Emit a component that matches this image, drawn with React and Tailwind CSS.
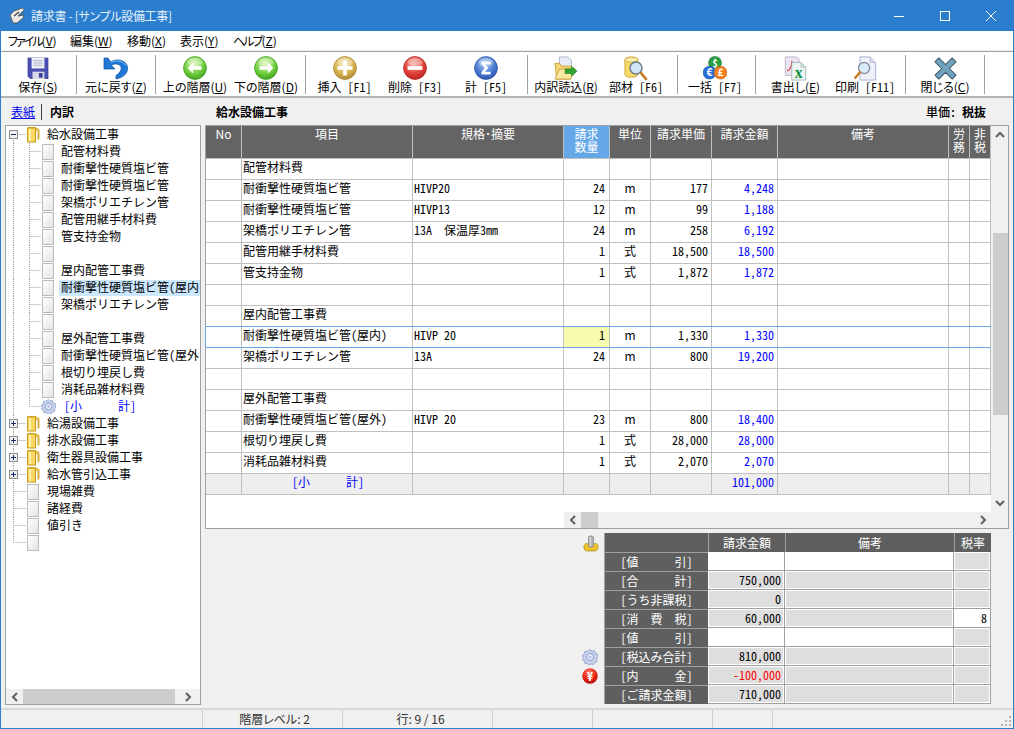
import React from "react";

const F = "[font-family:'Noto_Sans_CJK_JP','Noto_Sans',sans-serif]";
const HW = "[font-feature-settings:'hwid']";
const PW = "[font-feature-settings:'palt']";
const NM = "[font-feature-settings:normal]";

function U({ children }) {
  return <span className="underline">{children}</span>;
}

function Wide({ t }) {
  const parts = t.split("　");
  return (
    <>
      {parts.map((p, i) => (
        <React.Fragment key={i}>
          {i > 0 && <span className={NM}>　</span>}
          {p}
        </React.Fragment>
      ))}
    </>
  );
}

function Circle({ id, c1, c2, c3, children }) {
  return (
    <svg width="24" height="24" viewBox="0 0 26 26">
      <defs>
        <radialGradient id={id} cx="45%" cy="30%" r="75%">
          <stop offset="0%" stopColor={c1} />
          <stop offset="60%" stopColor={c2} />
          <stop offset="100%" stopColor={c3} />
        </radialGradient>
      </defs>
      <circle cx="13" cy="13" r="12.400" fill={`url(#${id})`} stroke={c3} strokeWidth="0.8" />
      <ellipse cx="13" cy="7" rx="8" ry="4.500" fill="#fff" opacity="0.3" />
      {children}
    </svg>
  );
}

const Floppy = () => (
  <svg width="22" height="22" viewBox="0 0 24 24">
    <path d="M1 1h22v23H4l-3-3z" fill="#4a4fb0" stroke="#3a3e96" strokeWidth="0.6" />
    <rect x="5" y="1" width="14" height="11.500" fill="#eef0f6" />
    <path d="M7 4h10M7 6.500h10M7 9h10" stroke="#a8acc8" strokeWidth="1" />
    <rect x="6" y="16" width="13" height="8" fill="#d8dae8" />
    <rect x="13" y="17.500" width="4" height="5" fill="#3a3e96" />
  </svg>
);

const Undo = () => (
  <svg width="26" height="24" viewBox="0 0 26 24">
    <path d="M1 2v11h11L8.500 9.400c3-2.200 7.700-1.800 9.100.7 1.600 3-.2 6.600-4.600 9.400L13 23c7-1.200 12-5.600 11.600-11.400C24 5 15.500 1.500 7.500 5.800L5 2z" fill="#1f78d8" stroke="#0f4f9e" strokeWidth="0.7" />
    <path d="M8 6.500c6-3 12-1.500 15 3" stroke="#7cc0ff" strokeWidth="1" fill="none" />
  </svg>
);

const ArrowLeft = () => (
  <Circle id="gl" c1="#d9f5b0" c2="#6fce3c" c3="#3c9a1e">
    <path d="M5 13l6-6v4h9v4h-9v4z" fill="#fff" />
  </Circle>
);
const ArrowRight = () => (
  <Circle id="gr" c1="#d9f5b0" c2="#6fce3c" c3="#3c9a1e">
    <path d="M21 13l-6-6v4H6v4h9v4z" fill="#fff" />
  </Circle>
);
const Plus = () => (
  <Circle id="gp" c1="#f4e6b0" c2="#d8b350" c3="#a8812c">
    <path d="M11 5h4v6h6v4h-6v6h-4v-6H5v-4h6z" fill="#fff" />
  </Circle>
);
const Minus = () => (
  <Circle id="gm" c1="#f8a8a0" c2="#e04038" c3="#b02020">
    <rect x="5" y="11" width="16" height="4" fill="#fff" />
  </Circle>
);
const Sigma = () => (
  <Circle id="gs" c1="#a8c8f4" c2="#4878d0" c3="#2850a8">
    <path d="M8 6h10v3h-6l3.500 4-3.500 4h6v3H8v-2.500L11.500 13 8 8.500z" fill="#fff" />
  </Circle>
);

const Import = () => (
  <svg width="24" height="24" viewBox="0 0 26 26">
    <path d="M6 1h9l4 4v9H6z" fill="#e8ecf8" stroke="#9aa4c8" strokeWidth="0.8" />
    <path d="M1 8h5l2 3h11l-1 14H3z" fill="#f4d878" stroke="#c89a28" strokeWidth="0.9" />
    <path d="M1 25l5-11h17l-5 11z" fill="#fbe8a0" stroke="#c89a28" strokeWidth="0.9" />
    <path d="M12 14h7v-3l6 5.500-6 5.500v-3h-7z" fill="#30a030" stroke="#1c7a1c" strokeWidth="0.6" />
  </svg>
);
const Parts = () => (
  <svg width="24" height="25" viewBox="0 0 26 27">
    <path d="M1 4c0-4 14-4 14 0v16c0 4-14 4-14 0z" fill="#f4d868" stroke="#c8a028" strokeWidth="0.9" />
    <ellipse cx="8" cy="4" rx="7" ry="2.600" fill="#fbeeb0" stroke="#c8a028" strokeWidth="0.7" />
    <circle cx="13" cy="13" r="6.500" fill="#cfe6f8" stroke="#6a7890" strokeWidth="1.600" />
    <path d="M18 18l6 7" stroke="#c87820" strokeWidth="2.600" strokeLinecap="round" />
  </svg>
);
const Coins = () => (
  <svg width="24" height="24" viewBox="0 0 26 26" className={F}>
    <circle cx="13" cy="7.500" r="7" fill="#2aa040" stroke="#107028" strokeWidth="0.6" />
    <circle cx="7" cy="18" r="7" fill="#2870d8" stroke="#1850a0" strokeWidth="0.6" />
    <circle cx="19" cy="18" r="7" fill="#f08020" stroke="#b85810" strokeWidth="0.6" />
    <text x="13" y="11.500" fontSize="11" fontWeight="700" fill="#fff" textAnchor="middle">$</text>
    <text x="7" y="22" fontSize="11" fontWeight="700" fill="#fff" textAnchor="middle">€</text>
    <text x="19" y="22" fontSize="11" fontWeight="700" fill="#fff" textAnchor="middle">£</text>
  </svg>
);
const Excel = () => (
  <svg width="23" height="25" viewBox="0 0 24 27" className="[font-family:'Liberation_Serif',serif]">
    <path d="M1 1h12l3 3v17H1z" fill="#ece6f4" stroke="#a8a0bc" strokeWidth="0.8" />
    <path d="M3 16c3-1 5-5 5-11" stroke="#e04040" strokeWidth="1.300" fill="none" />
    <path d="M8 7h10l5 5v14H8z" fill="#eef6f4" stroke="#90a8a8" strokeWidth="0.8" />
    <path d="M18 7v5h5" fill="#d0dce0" stroke="#90a8a8" strokeWidth="0.6" />
    <text x="15.500" y="24" fontSize="17" fontWeight="700" fill="#109040" textAnchor="middle">x</text>
  </svg>
);
const Preview = () => (
  <svg width="23" height="25" viewBox="0 0 24 27">
    <path d="M6 1h11l6 6v19H6z" fill="#f0f2fa" stroke="#9ca4cc" strokeWidth="0.9" />
    <path d="M17 1v6h6" fill="#d4d8ec" stroke="#9ca4cc" strokeWidth="0.6" />
    <circle cx="10.500" cy="13" r="6" fill="#d8ecfa" stroke="#8890a0" strokeWidth="1.500" />
    <path d="M6 17.500l-5 6" stroke="#c87820" strokeWidth="2.600" strokeLinecap="round" />
  </svg>
);
const CloseX = () => (
  <svg width="23" height="23" viewBox="0 0 24 24">
    <path d="M5 1l7 7 7-7 4 4-7 7 7 7-4 4-7-7-7 7-4-4 7-7-7-7z" fill="#6fa3bd" stroke="#40586c" strokeWidth="1.100" strokeLinejoin="round" />
  </svg>
);

const Gear = ({ size = 16 }) => (
  <svg width={size} height={size} viewBox="0 0 16 16">
    <path d="M8 .5l2 1.600 2.400-.4.800 2.400 2.300.9-.5 2.500L16 8.500l-1.500 1.900.4 2.400-2.400.7-1.200 2.100-2.400-.5L6.900 16l-1.500-1.600-2.500.1-.5-2.400L.5 10.700 1.300 8.500.4 6.200l2-1.300.4-2.500 2.500 0z" fill="#c6d2ec" stroke="#8a9cc8" strokeWidth="0.8" />
    <circle cx="8" cy="8" r="3.600" fill="#e8eef8" stroke="#8a9cc8" strokeWidth="1" />
    <circle cx="8" cy="8" r="1.500" fill="#b0c0e0" />
  </svg>
);

const YenIcon = () => (
  <svg width="16" height="16" viewBox="0 0 16 16" className={F}>
    <defs>
      <radialGradient id="gy" cx="45%" cy="30%" r="75%">
        <stop offset="0%" stopColor="#ff8a70" />
        <stop offset="60%" stopColor="#e82010" />
        <stop offset="100%" stopColor="#a80808" />
      </radialGradient>
    </defs>
    <circle cx="8" cy="8" r="7.700" fill="url(#gy)" />
    <text x="8" y="12.500" fontSize="12" fontWeight="700" fill="#fff" textAnchor="middle">¥</text>
  </svg>
);

const Lever = () => (
  <svg width="16" height="17" viewBox="0 0 16 17">
    <path d="M1 11c1-3 3-3 4-2h6c1-1 3-1 4 2 .5 2-.5 4-1.500 4.500-1 1-2 0-2.500.5H5c-.5-.5-1.500.5-2.500-.5C1.500 15 .5 13 1 11z" fill="#eec22c" stroke="#a88414" strokeWidth="0.7" />
    <rect x="5.500" y="1" width="5" height="11" rx="1.500" fill="#b4b4b4" stroke="#7c7c7c" strokeWidth="0.7" />
    <rect x="6.800" y="2" width="1.200" height="9" fill="#dcdcdc" />
  </svg>
);

const tools = [
  [[74, <Floppy />, <>保存(<U>S</U>)</>], [1]],
  [[78, <Undo />, <>元に戻す(<U>Z</U>)</>]],
  [[78, <ArrowLeft />, <>上の階層(<U>U</U>)</>], [64, <ArrowRight />, <>下の階層(<U>D</U>)</>], [7]],
  [[77, <Plus />, <span className={HW}>挿入 [F1]</span>], [64, <Minus />, <span className={HW}>削除 [F3]</span>], [78, <Sigma />, <span className={HW}>計 [F5]</span>], [2]],
  [[76, <Import />, <>内訳読込(<U>R</U>)</>], [64, <Parts />, <span className={HW}>部材 [F6]</span>], [9]],
  [[74, <Coins />, <span className={HW}>一括 [F7]</span>], [3]],
  [[79, <Excel />, <>書出し(<U>E</U>)</>], [60, <Preview />, <span className={HW}>印刷 [F11]</span>], [10]],
  [[78, <CloseX />, <>閉じる(<U>C</U>)</>]],
];

const W = [
  "w-[36px]", "w-[171px]", "w-[151px]", "w-[46px]", "w-[41px]",
  "w-[61px]", "w-[66px]", "w-[171px]", "w-[21px]", "w-[21px]",
];

const heads = [<span className={NM}>No</span>, "項目", "規格･摘要", <>請求<br />数量</>, "単位", "請求単価", "請求金額", "備考", <>労<br />務</>, <>非<br />税</>];

const rows = [
  ["配管材料費"],
  ["耐衝撃性硬質塩ビ管", "HIVP20", "24", "m", "177", "4,248"],
  ["耐衝撃性硬質塩ビ管", "HIVP13", "12", "m", "99", "1,188"],
  ["架橋ポリエチレン管", "13A　保温厚3mm", "24", "m", "258", "6,192"],
  ["配管用継手材料費", "", "1", "式", "18,500", "18,500"],
  ["管支持金物", "", "1", "式", "1,872", "1,872"],
  [],
  ["屋内配管工事費"],
  ["耐衝撃性硬質塩ビ管(屋内)", "HIVP 20", "1", "m", "1,330", "1,330"],
  ["架橋ポリエチレン管", "13A", "24", "m", "800", "19,200"],
  [],
  ["屋外配管工事費"],
  ["耐衝撃性硬質塩ビ管(屋外)", "HIVP 20", "23", "m", "800", "18,400"],
  ["根切り埋戻し費", "", "1", "式", "28,000", "28,000"],
  ["消耗品雑材料費", "", "1", "式", "2,070", "2,070"],
];

function Row({ r, active }) {
  const line = active ? "border-b-[#6aa8e6]" : "border-b-[#c0c0c0]";
  const base = `h-full shrink-0 border-r border-b border-r-[#c0c0c0] ${line} leading-[15px] whitespace-nowrap`;
  return (
    <div className={`flex h-[21px] relative ${active ? "shadow-[0_-1px_0_#6aa8e6,-1px_0_0_#6aa8e6]" : ""}`}>
      <div className={`${W[0]} ${base}`} />
      <div className={`${W[1]} ${base} pl-px`}>{r[0]}</div>
      <div className={`${W[2]} ${base} pl-px`}>{r[1] && <Wide t={r[1]} />}</div>
      <div className={`${W[3]} ${base} text-right pr-[4px] ${active ? "bg-[#f6fbb0]" : ""}`}>{r[2]}</div>
      <div className={`${W[4]} ${base} text-center ${NM}`}>{r[3]}</div>
      <div className={`${W[5]} ${base} text-right pr-[3px]`}>{r[4]}</div>
      <div className={`${W[6]} ${base} text-right pr-[3px] text-[#0000ff]`}>{r[5]}</div>
      <div className={`${W[7]} ${base}`} />
      <div className={`${W[8]} ${base}`} />
      <div className={`${W[9]} ${base}`} />
    </div>
  );
}

function TotalRow() {
  const base = "h-full shrink-0 border-r border-b border-[#c0c0c0] leading-[15px] whitespace-nowrap";
  return (
    <div className="flex h-[21px] bg-[#eeeeee]">
      <div className={`${W[0]} ${base}`} />
      <div className={`${W[1]} ${base} pl-[50px] text-[#0000ff]`}><Wide t="[小　　　計]" /></div>
      <div className={`${W[2]} ${base}`} />
      <div className={`${W[3]} ${base}`} />
      <div className={`${W[4]} ${base}`} />
      <div className={`${W[5]} ${base}`} />
      <div className={`${W[6]} ${base} text-right pr-[3px] text-[#0000ff]`}>101,000</div>
      <div className={`${W[7]} ${base}`} />
      <div className={`${W[8]} ${base}`} />
      <div className={`${W[9]} ${base}`} />
    </div>
  );
}

const dot = { stroke: "#a0a0a0", strokeWidth: 1, strokeDasharray: "1 1" };

function Expander({ plus }) {
  return (
    <g>
      <rect x="3.500" y="4.500" width="8" height="8" fill="#f0f0f0" stroke="#8c8c8c" />
      <path d={plus ? "M5 8.500h5M7.500 6v5" : "M5 8.500h5"} stroke="#1c2c70" fill="none" />
    </g>
  );
}

const PageIcon = () => (
  <span className="block w-[12px] h-[16px] shrink-0 border border-[#bcbcbc] bg-gradient-to-br from-[#ffffff] to-[#e4e4e4]" />
);
const FolderIcon = () => (
  <svg width="13" height="16" viewBox="0 0 13 16" className="shrink-0">
    <path d="M1 .5h7l4 2v9l-1 1V4L8 2.500z" fill="#f4d468" stroke="#c89a18" strokeWidth="0.8" />
    <rect x=".5" y="1" width="8" height="14" fill="#fbd860" stroke="#c89a18" />
    <rect x="2" y="2" width="2" height="12" fill="#fdeeb0" />
  </svg>
);

function Top({ label, last, first, plus, leaf }) {
  return (
    <div className="flex h-[17px] items-center">
      <svg width="21" height="17" viewBox="0 0 21 17" className="shrink-0">
        {!last && !first && <path d="M7.500 0V17" {...dot} />}
        {first && <path d="M7.500 12V17" {...dot} />}
        {last && <path d="M7.500 0V8" {...dot} />}
        <path d="M7.500 8.500H20" {...dot} />
        {!leaf && <Expander plus={plus} />}
      </svg>
      {leaf ? <PageIcon /> : <FolderIcon />}
      <span className={`h-[17px] leading-[15px] whitespace-nowrap ${leaf ? "ml-[8px]" : "ml-[7px]"}`}>{label}</span>
    </div>
  );
}

function Child({ label, selected, last, gear, blue }) {
  return (
    <div className="flex h-[17px] items-center">
      <svg width="36" height="17" viewBox="0 0 36 17" className="shrink-0">
        <path d="M7.500 0V17" {...dot} />
        <path d={last ? "M23.500 0V8" : "M23.500 0V17"} {...dot} />
        <path d="M23.500 8.500H35" {...dot} />
      </svg>
      {gear ? <span className="-ml-px"><Gear size={15} /></span> : <PageIcon />}
      <span
        className={`ml-[5px] flex-1 min-w-0 h-[16px] mb-[-1px] leading-[14px] whitespace-nowrap ${selected ? "bg-[#cce8ff]" : ""} ${blue ? "text-[#0000ff] pl-[3px]" : "pl-[2px]"}`}
      >
        {label}
      </span>
    </div>
  );
}

const Chev = ({ d }) => (
  <svg width="10" height="10" viewBox="0 0 10 10">
    <path d={d} fill="none" stroke="#606060" strokeWidth="2" />
  </svg>
);
const L = "M7 1L3 5l4 4";
const R = "M3 1l4 4-4 4";
const Up = "M1 7l4-4 4 4";
const Dn = "M1 3l4 4 4-4";

const sumRows = [
  ["[値　　　引]", "", "", "", true, true, false],
  ["[合　　　計]", "750,000", "", "", false, false, false],
  ["[うち非課税]", "0", "", "", false, false, false],
  ["[消　費　税]", "60,000", "", "8", false, false, true],
  ["[値　　　引]", "", "", "", true, true, false],
  ["[税込み合計]", "810,000", "", "", false, false, false],
  ["[内　　　金]", "-100,000", "", "", false, false, false],
  ["[ご請求金額]", "710,000", "", "", false, false, false],
];

function SumCell({ w, white, children, red }) {
  return (
    <div className={`${w} h-[19px] shrink-0 border-r border-b border-[#a0a0a0] bg-white`}>
      <div className={`h-full leading-[15px] text-right pr-[2px] border border-white whitespace-nowrap ${white ? "bg-white" : "bg-[#dedede]"} ${red ? "text-[#ff0000]" : ""}`}>
        {children}
      </div>
    </div>
  );
}

export default function App() {
  return (
    <div className={`w-[1014px] h-[729px] flex flex-col bg-[#f0f0f0] border-x border-b border-[#2b7fcd] text-[12px] text-black overflow-hidden ${F} ${HW}`}>
      {/* title bar */}
      <div className="h-[31px] -mx-px shrink-0 bg-[#2b7ecd] flex items-center pl-[9px] text-[#e6f0fa]">
        <svg width="17" height="17" viewBox="0 0 17 17" className="shrink-0">
          <path d="M1 8l4-4 8-3c1 0 2 1 2 2L9 9l6-1-1 3-6 5H4z" fill="#e8e8e8" stroke="#505050" strokeWidth="0.9" />
          <path d="M5 9l5-4" stroke="#404040" strokeWidth="1.200" />
        </svg>
        <span className={`ml-[5px] tracking-[-0.3px] ${PW}`}>請求書 - [サンプル設備工事]</span>
        <div className="ml-auto flex items-center">
          <span className="w-[46px] flex justify-center">
            <svg width="10" height="10" viewBox="0 0 10 10"><path d="M0 5.500h10" stroke="#fff" /></svg>
          </span>
          <span className="w-[45px] flex justify-center">
            <svg width="10" height="10" viewBox="0 0 10 10"><rect x=".5" y=".5" width="9" height="9" fill="none" stroke="#fff" /></svg>
          </span>
          <span className="w-[47px] flex justify-center">
            <svg width="10" height="10" viewBox="0 0 10 10"><path d="M0 0l10 10M10 0L0 10" stroke="#fff" /></svg>
          </span>
        </div>
      </div>

      {/* menu */}
      <div className={`h-[19px] shrink-0 bg-white flex items-center pl-[7px] leading-none ${PW}`}>
        <span className="w-[62px]"><span className="tracking-[-2px]">ファイル</span>(<U>V</U>)</span>
        <span className="w-[57px]">編集(<U>W</U>)</span>
        <span className="w-[53px]">移動(<U>X</U>)</span>
        <span className="w-[53px]">表示(<U>Y</U>)</span>
        <span><span className="tracking-[-2px]">ヘルプ</span>(<U>Z</U>)</span>
      </div>

      {/* toolbar */}
      <div className="h-[47px] mt-px shrink-0 bg-white border-t border-b-2 border-t-[#a0a0a0] border-b-[#b4b4b4] flex items-start pt-[3px]">
        {tools.map((group, gi) => (
          <React.Fragment key={gi}>
            {group.map(([w, icon, label], i) => (
              <div key={i} style={{ width: w }} className="shrink-0 flex flex-col items-center h-[40px]">
                {icon && <div className="h-[26px] flex items-center justify-center">{icon}</div>}
                {label && <div className={`h-[14px] leading-[14px] -mt-px whitespace-nowrap ${PW}`}>{label}</div>}
              </div>
            ))}
            <span className="w-px h-[39px] bg-[#a0a0a0] shrink-0" />
          </React.Fragment>
        ))}
      </div>

      {/* sub header */}
      <div className="h-[27px] shrink-0 flex items-center">
        <span className="ml-[10px] text-[#0000ee] underline">表紙</span>
        <span className="ml-[6px] w-px h-[16px] bg-[#404040]" />
        <span className="ml-[8px] font-bold">内訳</span>
        <span className="ml-[142px] font-bold">給水設備工事</span>
        <span className="ml-auto mr-[6px] font-medium">単価:</span>
        <span className="mr-[27px] font-bold">税抜</span>
      </div>

      {/* body */}
      <div className="flex h-[580px] shrink-0 items-start">
        {/* tree */}
        <div className="w-[196px] h-[580px] ml-[4px] shrink-0 border border-[#a0a0a0] bg-white flex flex-col">
          <div className="flex-1 min-h-0 overflow-hidden">
            <Top label="給水設備工事" first />
            {["配管材料費", "耐衝撃性硬質塩ビ管", "耐衝撃性硬質塩ビ管", "架橋ポリエチレン管", "配管用継手材料費", "管支持金物", "", "屋内配管工事費"].map((t, i) => (
              <Child key={i} label={t} />
            ))}
            <Child label="耐衝撃性硬質塩ビ管(屋内" selected />
            <Child label="架橋ポリエチレン管" />
            <Child label="" />
            <Child label="屋外配管工事費" />
            <Child label="耐衝撃性硬質塩ビ管(屋外" />
            <Child label="根切り埋戻し費" />
            <Child label="消耗品雑材料費" />
            <Child label={<Wide t="[小　　　計]" />} gear blue last />
            {["給湯設備工事", "排水設備工事", "衛生器具設備工事", "給水管引込工事"].map((t) => (
              <Top key={t} label={t} plus />
            ))}
            {["現場雑費", "諸経費", "値引き"].map((t) => (
              <Top key={t} label={t} leaf />
            ))}
            <Top label="" leaf last />
          </div>
          <div className="h-[15px] shrink-0 flex items-center bg-[#f0f0f0]">
            <span className="w-[17px] flex justify-center"><Chev d={L} /></span>
            <span className="w-[152px] h-full bg-[#cdcdcd]" />
            <span className="flex-1 flex justify-center"><Chev d={R} /></span>
          </div>
        </div>

        {/* right */}
        <div className="ml-[4px] w-[804px] shrink-0 flex flex-col">
          <div className="h-[404px] border border-[#a0a0a0] bg-white flex">
            <div className="w-[785px] shrink-0 flex flex-col">
              <div className="flex h-[33px] bg-[#646464] text-white">
                {heads.map((h, i) => (
                  <div
                    key={i}
                    className={`${W[i]} shrink-0 h-full border-r border-b border-[#c0c0c0] text-center pt-px leading-[13px] ${i === 3 ? "bg-[#65a8e8]" : ""}`}
                  >
                    {h}
                  </div>
                ))}
              </div>
              {rows.map((r, i) => (
                <Row key={i} r={r} active={i === 8} />
              ))}
              <TotalRow />
              <div className="flex-1 flex flex-col justify-end">
                <div className="h-[16px] ml-[358px] flex items-center bg-[#f0f0f0] w-[427px]">
                  <span className="w-[17px] flex justify-center"><Chev d={L} /></span>
                  <span className="w-[17px] h-full bg-[#cdcdcd]" />
                  <span className="flex-1 flex justify-end pr-[3px]"><Chev d={R} /></span>
                </div>
              </div>
            </div>
            <div className="flex-1 bg-[#f0f0f0] flex flex-col items-center">
              <span className="h-[17px] flex items-center"><Chev d={Up} /></span>
              <span className="w-full h-[90px]" />
              <span className="w-[15px] self-end h-[182px] bg-[#cdcdcd]" />
              <span className="w-full flex-1" />
              <span className="h-[33px] flex items-start pt-[3px]"><Chev d={Dn} /></span>
            </div>
          </div>

          {/* summary */}
          <div className="mt-[4px] ml-[377px] w-[409px] flex flex-col">
            <div className="flex">
              <div className="w-[22px] h-[19px] shrink-0 flex justify-start pt-[2px] pl-px"><Lever /></div>
              <div className="flex flex-col border-l border-t border-[#a0a0a0] w-[387px]">
                <div className="flex h-[19px] bg-[#5f5f5f] text-white -mt-px">
                  <div className="w-[104px] shrink-0 border-r border-[#a0a0a0]" />
                  <div className="w-[77px] shrink-0 border-r border-[#a0a0a0] text-center leading-[19px]">請求金額</div>
                  <div className="w-[169px] shrink-0 border-r border-[#a0a0a0] text-center leading-[19px]">備考</div>
                  <div className="flex-1 text-center leading-[19px]">税率</div>
                </div>
              </div>
            </div>
            {sumRows.map((r, i) => (
              <div key={i} className="flex">
                <div className="w-[22px] h-[19px] shrink-0 flex items-center">
                  {i === 5 && <Gear />}
                  {i === 6 && <YenIcon />}
                </div>
                <div className="w-[104px] shrink-0 h-[19px] bg-[#5f5f5f] text-white border-l border-t border-[#a0a0a0] text-center leading-[17px] whitespace-nowrap">
                  <Wide t={r[0]} />
                </div>
                <SumCell w="w-[77px]" white={r[4]} red={i === 6}>{r[1]}</SumCell>
                <SumCell w="w-[169px]" white={r[5]}>{r[2]}</SumCell>
                <SumCell w="w-[37px]" white={r[6]}>{r[3]}</SumCell>
              </div>
            ))}
          </div>
        </div>
      </div>

      {/* status bar */}
      <div className={`mt-auto h-[20px] shrink-0 border-t-2 border-[#d8d8d8] flex items-center text-[#303030] ${PW}`}>
        <span className="w-[202px] h-full border-r border-[#d0d0d0]" />
        <span className="w-[140px] h-full border-r border-[#d0d0d0] text-center leading-[17px] pl-[4px]">階層レベル: 2</span>
        <span className="w-[150px] h-full border-r border-[#d0d0d0] text-center leading-[17px] pl-[6px]">行: 9 / 16</span>
        <span className="w-[100px] h-full border-r border-[#d0d0d0]" />
        <span className="w-[120px] h-full border-r border-[#d0d0d0]" />
        <span className="w-[60px] h-full border-r border-[#d0d0d0]" />
        <svg width="12" height="12" viewBox="0 0 12 12" className="ml-auto mt-[2px]">
          <path d="M8 2h2v2H8zM4 6h2v2H4zM8 6h2v2H8zM0 10h2v2H0zM4 10h2v2H4zM8 10h2v2H8z" fill="#b8b8b8" />
        </svg>
      </div>
    </div>
  );
}
